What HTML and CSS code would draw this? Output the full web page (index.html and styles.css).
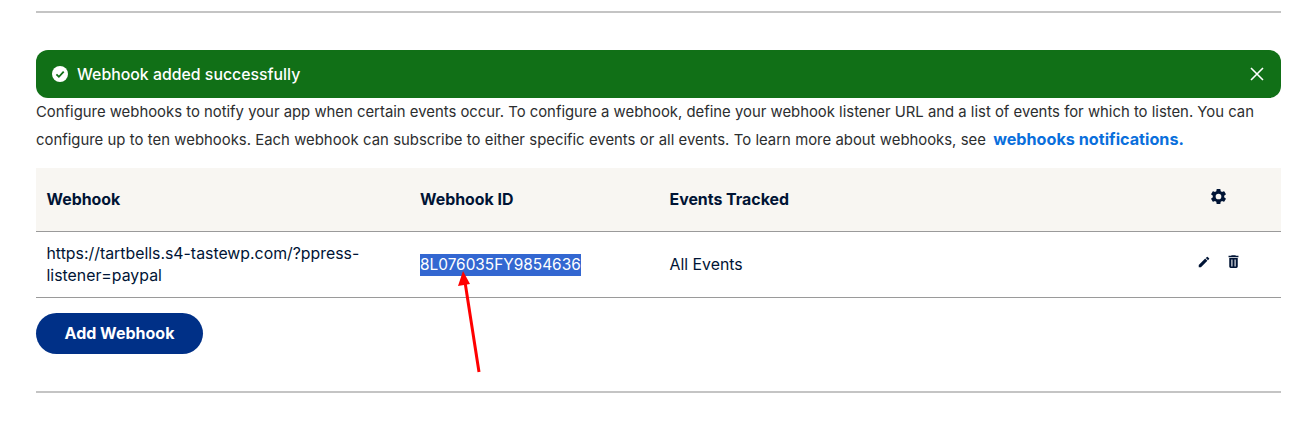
FILE: index.html
```html
<!DOCTYPE html>
<html lang="en">
<head>
<meta charset="utf-8">
<title>Webhooks</title>
<link rel="stylesheet" href="styles.css">
</head>
<body>
<main class="page">
  <hr class="rule rule-top">
  <div class="alert">
    <svg class="alert-check" width="16" height="16" viewBox="0 0 16 16"><circle cx="8" cy="8" r="8" fill="#fff"/><path d="M4.4 8.3l2.5 2.5 4.8-5.2" fill="none" stroke="#117017" stroke-width="1.8"/></svg>
    <span class="alert-text">Webhook added successfully</span>
    <svg class="alert-close" width="14" height="14" viewBox="0 0 14 14"><path d="M1 1l12 12M13 1L1 13" stroke="#fff" stroke-width="1.6" fill="none"/></svg>
  </div>
  <p class="intro">Configure webhooks to notify your app when certain events occur. To configure a webhook, define your webhook listener URL and a list of events for which to listen. You can <span class="intro-tail">configure up to ten webhooks. Each webhook can subscribe to either specific events or all events. To learn more about webhooks, see</span> <a class="intro-link" href="#">webhooks notifications.</a></p>
  <div class="table">
    <div class="row row-head">
      <div class="col col-url">Webhook</div>
      <div class="col col-id">Webhook ID</div>
      <div class="col col-events">Events Tracked</div>
      <div class="col col-actions">
        <svg class="gear" width="19" height="19" viewBox="0 0 24 24"><path fill="#001435" d="M19.14 12.94c.04-.3.06-.61.06-.94s-.02-.64-.07-.94l2.03-1.58a.49.49 0 0 0 .12-.61l-1.92-3.32a.49.49 0 0 0-.59-.22l-2.39.96a7 7 0 0 0-1.62-.94l-.36-2.54a.48.48 0 0 0-.48-.41h-3.84a.47.47 0 0 0-.47.41l-.36 2.54c-.59.24-1.13.57-1.62.94l-2.39-.96a.48.48 0 0 0-.59.22L2.74 8.87a.47.47 0 0 0 .12.61l2.03 1.58c-.05.3-.09.63-.09.94s.02.64.07.94l-2.03 1.58a.49.49 0 0 0-.12.61l1.92 3.32c.12.22.37.29.59.22l2.39-.96c.5.38 1.03.7 1.62.94l.36 2.54c.05.24.24.41.48.41h3.84c.24 0 .44-.17.47-.41l.36-2.54c.59-.24 1.13-.56 1.62-.94l2.39.96c.22.08.47 0 .59-.22l1.92-3.32a.46.46 0 0 0-.12-.61l-2.01-1.58zM12 15.6A3.6 3.6 0 1 1 12 8.4a3.6 3.6 0 0 1 0 7.2z"/></svg>
      </div>
    </div>
    <div class="row row-body">
      <div class="col col-url">https://tartbells.s4-tastewp.com/?ppress-listener=paypal</div>
      <div class="col col-id"><span class="selected">8L076035FY9854636</span></div>
      <div class="col col-events">All Events</div>
      <div class="col col-actions row-icons">
        <svg width="14" height="14" viewBox="0 0 24 24"><path fill="#001435" d="M3 17.25V21h3.75L17.81 9.94l-3.75-3.75L3 17.25zM20.71 7.04a1 1 0 0 0 0-1.41l-2.34-2.34a1 1 0 0 0-1.41 0l-1.83 1.83 3.75 3.75 1.83-1.83z"/></svg>
        <svg width="17" height="17" viewBox="0 0 24 24"><path fill="#001435" fill-rule="evenodd" d="M6 19c0 1.1.9 2 2 2h8a2 2 0 0 0 2-2V7H6v12zM19 4h-3.500l-1-1h-5l-1 1H5v2h14V4zM9 9h1.500v10H9V9zm4.500 0H15v10h-1.500V9z"/></svg>
      </div>
    </div>
  </div>
  <button class="add-btn" type="button">Add Webhook</button>
  <hr class="rule rule-bottom">
  <svg class="arrow" width="30" height="110" viewBox="0 0 30 110"><path d="M23 104L9 14" stroke="#f00" stroke-width="3" fill="none"/><path d="M7 3l7 13-12 2z" fill="#f00"/></svg>
</main>
</body>
</html>
```

FILE: styles.css
```css
* { box-sizing: border-box; }
html, body { margin: 0; padding: 0; background: #fff; }
body { font-family: Inter, "Liberation Sans", sans-serif; color: #001435; overflow: hidden; }
.page { position: relative; height: 436px; padding: 11px 22px 0 36px; }
.rule { margin: 0; border: 0; height: 2px; background: #c4c4c4; }
.rule-top { margin-bottom: 37px; }
.rule-bottom { margin-top: 37px; }
.alert { display: flex; align-items: center; height: 48px; padding: 0 16px; background: #117017; border-radius: 12px; color: #fff; font-size: 15.85px; font-weight: 500; }
.alert-check { margin-right: 9px; }
.alert-text { flex: 1; }
.alert-close { margin-right: 1px; }
.intro { margin: 0; font-size: 14.87px; line-height: 28px; color: #2c2e2f; height: 70px; }
.intro-tail { word-spacing: .2px; }
.intro-link { margin-left: 3px; color: #0a6fdc; font-weight: 700; font-size: 16.2px; line-height: 20px; text-decoration: none; }
.row { display: flex; }
.row-head { height: 64px; background: #f8f6f2; border-bottom: 1px solid #9a9a9a; font-weight: 700; font-size: 15.9px; align-items: center; }
.row-body { height: 66px; border-bottom: 1px solid #9a9a9a; font-size: 15.85px; align-items: center; line-height: 22px; }
.col-url { width: 384px; padding: 0 10px 0 10.5px; }
.col-id { width: 249.5px; }
.col-events { flex: 1; }
.col-actions { width: 100px; }
.row-head .col-actions { padding: 0 0 6px 28px; display: flex; }
.row-icons { display: flex; align-items: center; gap: 14px; padding: 0 0 6px 15.5px; }
.selected { background: #3367d1; color: #fff; display: inline-block; font-size: 15.4px; line-height: 22px; }
.add-btn { display: block; margin-top: 15px; padding: 0 0 2px; width: 167px; height: 41px; border: 0; border-radius: 21px; background: #003087; color: #fff; font: 700 16px Inter, "Liberation Sans", sans-serif; }
.arrow { position: absolute; left: 456px; top: 268px; }
```
